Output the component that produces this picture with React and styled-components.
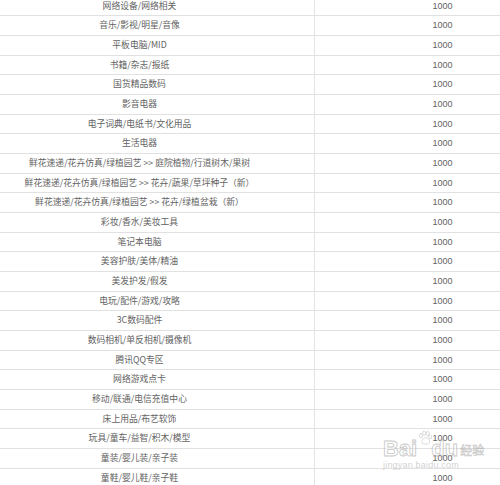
import React from 'react';
import styled, { createGlobalStyle } from 'styled-components';

// Data
const categories = [
  '网络设备/网络相关',
  '音乐/影视/明星/音像',
  '平板电脑/MID',
  '书籍/杂志/报纸',
  '国货精品数码',
  '影音电器',
  '电子词典/电纸书/文化用品',
  '生活电器',
  '鲜花速递/花卉仿真/绿植园艺 >> 庭院植物/行道树木/果树',
  '鲜花速递/花卉仿真/绿植园艺 >> 花卉/蔬果/草坪种子（新）',
  '鲜花速递/花卉仿真/绿植园艺 >> 花卉/绿植盆栽（新）',
  '彩妆/香水/美妆工具',
  '笔记本电脑',
  '美容护肤/美体/精油',
  '美发护发/假发',
  '电玩/配件/游戏/攻略',
  '3C数码配件',
  '数码相机/单反相机/摄像机',
  '腾讯QQ专区',
  '网络游戏点卡',
  '移动/联通/电信充值中心',
  '床上用品/布艺软饰',
  '玩具/童车/益智/积木/模型',
  '童装/婴儿装/亲子装',
  '童鞋/婴儿鞋/亲子鞋'
];

const GlobalStyle = createGlobalStyle`
  html, body {
    margin: 0;
    padding: 0;
    background: #fff;
  }
  body {
    width: 500px;
    height: 485px;
    overflow: hidden;
  }
`;

// App
const App = () => (
  <Page>
    <GlobalStyle />
    <Table>
      {categories.map((name) => (
        <Row key={name}>
          <NameCell>{name}</NameCell>
          <ValueCell>1000</ValueCell>
        </Row>
      ))}
    </Table>
    <Watermark aria-hidden="true">
      <Brand>
        <BrandText>Bai</BrandText>
        <Paw viewBox="0 0 20 20">
          <ellipse cx="5" cy="7" rx="2" ry="2.6" />
          <ellipse cx="9" cy="4" rx="2" ry="2.6" />
          <ellipse cx="13.5" cy="4.5" rx="2" ry="2.6" />
          <ellipse cx="16.5" cy="8.5" rx="1.8" ry="2.4" />
          <path d="M6 15c0-3 2.5-5.5 5-5.5s5 2.5 5 5.5c0 2-2 2.5-5 2.5s-5-0.5-5-2.5z" />
        </Paw>
        <BrandText>du</BrandText>
        <BrandCn>经验</BrandCn>
      </Brand>
      <BrandUrl>jingyan.baidu.com</BrandUrl>
    </Watermark>
  </Page>
);

export default App;

// Styles
const Page = styled.div`
  position: relative;
  width: 500px;
  height: 485px;
  overflow: hidden;
  font-family: "Liberation Sans", "Noto Sans CJK SC", sans-serif;
  color: #636363;
`;

const Table = styled.div`
  display: flex;
  flex-direction: column;
  margin-top: -3.2px;
`;

const Row = styled.div`
  display: grid;
  grid-template-columns: 315px 1fr;
  height: 19.67px;
  box-sizing: border-box;
  border-bottom: 1px solid #e1e1e1;
  font-size: 9px;
  line-height: 18px;
  white-space: nowrap;
`;

const NameCell = styled.div`
  border-right: 1px solid #e4e4e4;
  padding-right: 35px;
  text-align: center;
  font-family: "Noto Sans CJK SC", "Liberation Sans", sans-serif;
  font-size: 8.8px;
`;

const ValueCell = styled.div`
  padding-left: 70px;
  text-align: center;
  font-size: 9px;
`;

const Watermark = styled.div`
  position: absolute;
  left: 383px;
  top: 430px;
  display: flex;
  flex-direction: column;
  align-items: flex-start;
  opacity: 0.55;
  pointer-events: none;
`;

const Brand = styled.div`
  display: flex;
  align-items: flex-end;
  height: 30px;
`;

const BrandText = styled.span`
  font-family: "Liberation Sans", sans-serif;
  font-size: 22px;
  font-weight: bold;
  line-height: 22px;
  color: #fff;
  -webkit-text-stroke: 0.8px #9a9a9a;
`;

const Paw = styled.svg`
  width: 16px;
  height: 16px;
  margin: 0 -2px 14px 0;
  fill: #fff;
  stroke: #9a9a9a;
  stroke-width: 0.8;
`;

const BrandCn = styled.span`
  font-family: "Noto Sans CJK SC", sans-serif;
  font-size: 12px;
  line-height: 20px;
  margin-left: 2px;
  color: #fff;
  -webkit-text-stroke: 0.6px #9a9a9a;
`;

const BrandUrl = styled.span`
  font-family: "Liberation Sans", sans-serif;
  font-size: 9px;
  line-height: 11px;
  color: #b0b0b0;
  letter-spacing: 0.2px;
`;
